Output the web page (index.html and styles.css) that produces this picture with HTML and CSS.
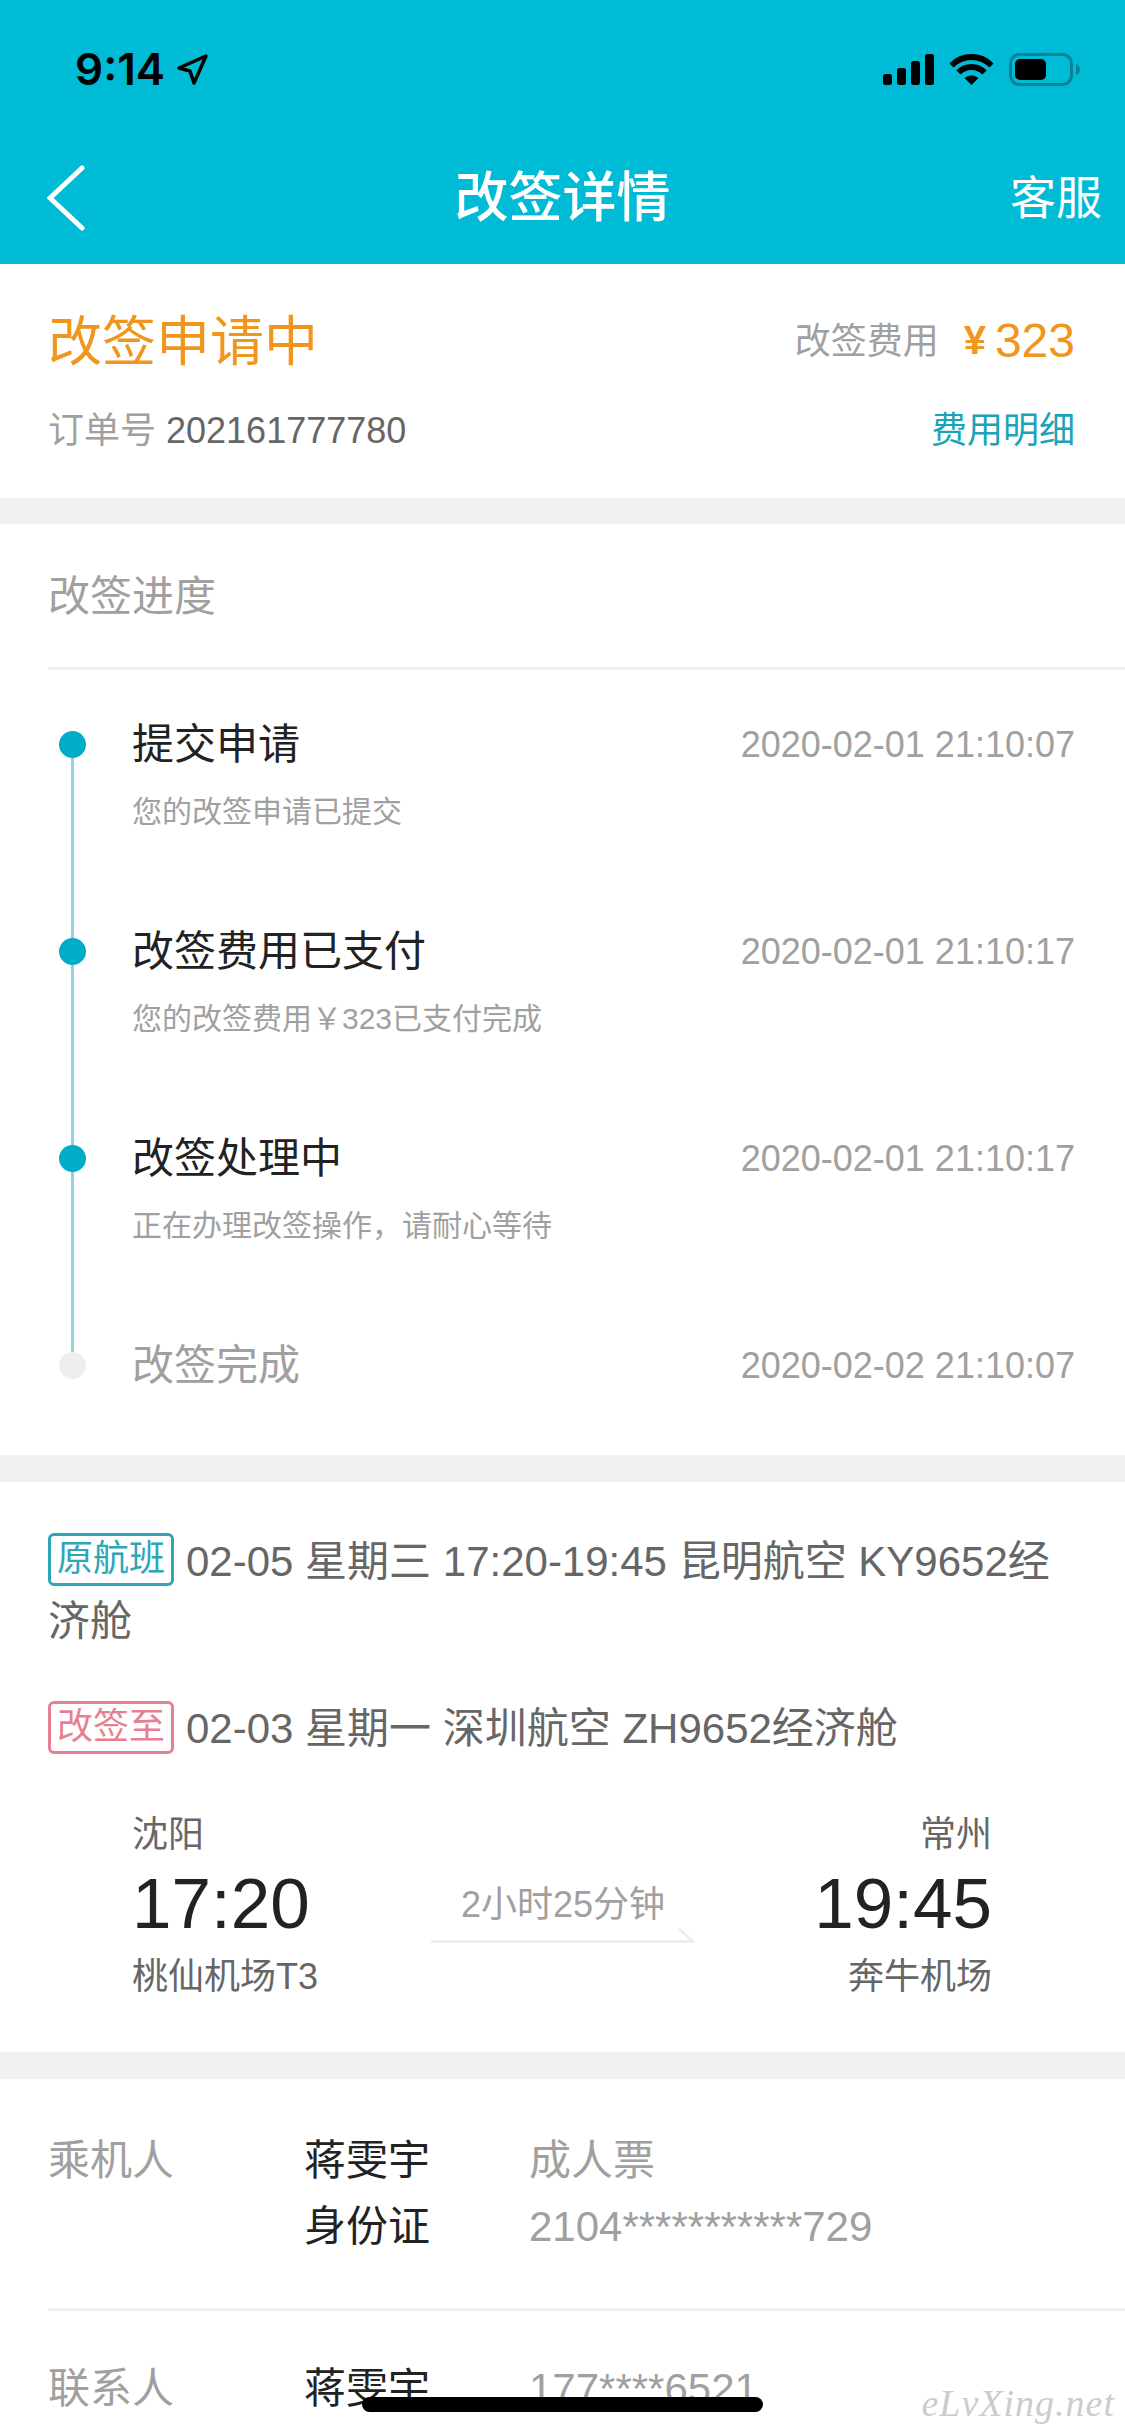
FILE: index.html
```html
<!DOCTYPE html>
<html lang="zh-CN">
<head>
	<meta charset="utf-8">
	<title>改签详情</title>
	<link rel="stylesheet" href="styles.css">
</head>
<body>
<div class="page">
	<header class="top">
		<div class="status">
			<div class="status-left">
				<span class="clock">9:14</span>
				<svg class="loc" width="33" height="33" viewBox="0 0 33 33"><path d="M30 3L3 15L14 18L18 30Z" fill="none" stroke="#000" stroke-width="3.500" stroke-linejoin="round"/></svg>
			</div>
			<div class="status-right">
				<svg width="51" height="31" viewBox="0 0 51 31"><rect x="0" y="20" width="9" height="11" rx="2.5"/><rect x="14" y="14" width="9" height="17" rx="2.5"/><rect x="28" y="7" width="9" height="24" rx="2.5"/><rect x="42" y="0" width="9" height="31" rx="2.5"/></svg>
				<svg width="45" height="31" viewBox="0 0 45 31"><path d="M2.5 11.5A28 28 0 0 1 42.5 11.5" fill="none" stroke="#000" stroke-width="6"/><path d="M9.5 18.5A18 18 0 0 1 35.5 18.5" fill="none" stroke="#000" stroke-width="6"/><path d="M15.5 24Q22.5 18.5 29.500 24L22.5 31Z"/></svg>
				<svg width="73" height="33" viewBox="0 0 73 33"><rect x="1.5" y="1.500" width="61" height="30" rx="9" fill="none" stroke="#0b8096" stroke-width="3"/><rect x="6" y="6" width="31" height="21" rx="5"/><path d="M67 11Q71 13 71 16.500Q71 20 67 22Z" fill="#0b8096"/></svg>
			</div>
		</div>
		<nav class="nav">
			<svg class="back" width="38" height="66" viewBox="0 0 38 66"><path d="M35 3L3 33L35 63" fill="none" stroke="#fff" stroke-width="5" stroke-linecap="round" stroke-linejoin="miter"/></svg>
			<h1 class="nav-title">改签详情</h1>
			<a class="nav-link">客服</a>
		</nav>
	</header>

	<section class="card summary">
		<div class="row">
			<div class="state">改签申请中</div>
			<div class="fee"><span class="fee-label">改签费用</span><span class="fee-yen">¥</span><span class="fee-num">323</span></div>
		</div>
		<div class="row row-second">
			<div class="order"><span class="muted">订单号</span> 202161777780</div>
			<a class="detail-link">费用明细</a>
		</div>
	</section>

	<section class="card progress">
		<h2 class="section-title">改签进度</h2>
		<ol class="steps">
			<li class="step">
				<div class="mark"><span class="dot"></span><span class="connector"></span></div>
				<div class="step-body">
					<div class="step-head"><span class="step-name">提交申请</span><span class="step-time">2020-02-01 21:10:07</span></div>
					<p class="step-note">您的改签申请已提交</p>
				</div>
			</li>
			<li class="step">
				<div class="mark"><span class="dot"></span><span class="connector"></span></div>
				<div class="step-body">
					<div class="step-head"><span class="step-name">改签费用已支付</span><span class="step-time">2020-02-01 21:10:17</span></div>
					<p class="step-note">您的改签费用￥323已支付完成</p>
				</div>
			</li>
			<li class="step">
				<div class="mark"><span class="dot"></span><span class="connector"></span></div>
				<div class="step-body">
					<div class="step-head"><span class="step-name">改签处理中</span><span class="step-time">2020-02-01 21:10:17</span></div>
					<p class="step-note">正在办理改签操作，请耐心等待</p>
				</div>
			</li>
			<li class="step step-last">
				<div class="mark"><span class="dot dot-off"></span></div>
				<div class="step-body">
					<div class="step-head"><span class="step-name name-off">改签完成</span><span class="step-time">2020-02-02 21:10:07</span></div>
				</div>
			</li>
		</ol>
	</section>

	<section class="card flight">
		<p class="flight-line"><span class="tag tag-old">原航班</span>02-05 星期三 17:20-19:45 昆明航空 KY9652经<br>济舱</p>
		<p class="flight-line flight-new"><span class="tag tag-new">改签至</span>02-03 星期一 深圳航空 ZH9652经济舱</p>
		<div class="route">
			<div class="end">
				<div class="city">沈阳</div>
				<div class="time">17:20</div>
				<div class="airport">桃仙机场T3</div>
			</div>
			<div class="middle">
				<div class="duration">2小时25分钟</div>
				<svg class="route-arrow" width="264" height="16" viewBox="0 0 264 16"><path d="M0 13.500H262L248 1" fill="none" stroke="#eeeeee" stroke-width="3"/></svg>
			</div>
			<div class="end end-right">
				<div class="city">常州</div>
				<div class="time">19:45</div>
				<div class="airport">奔牛机场</div>
			</div>
		</div>
	</section>

	<section class="card people">
		<div class="person person-first">
			<div class="person-label">乘机人</div>
			<div class="person-name">蒋雯宇</div>
			<div class="person-value">成人票</div>
			<div class="person-name person-col">身份证</div>
			<div class="person-value">2104***********729</div>
		</div>
		<div class="person person-second">
			<div class="person-label">联系人</div>
			<div class="person-name">蒋雯宇</div>
			<div class="person-value">177****6521</div>
		</div>
	</section>

	<div class="home-bar"></div>
	<div class="watermark">eLvXing.net</div>
</div>
</body>
</html>
```

FILE: styles.css
```css
* {
	box-sizing: border-box;
}

html, body {
	margin: 0;
	padding: 0;
}

body {
	font-family: "Liberation Sans", "Noto Sans CJK SC", sans-serif;
	color: #222;
	background: #f1f1f1;
}

p, h1, h2, ol {
	margin: 0;
	padding: 0;
	font-weight: normal;
}

.page {
	position: relative;
	width: 1125px;
	height: 2436px;
	overflow: hidden;
}

/* top bar */
.top {
	background: #00bbd5;
	height: 264px;
}

.status {
	height: 130px;
	padding: 8px 43px 0 75px;
	display: flex;
	justify-content: space-between;
	align-items: center;
}

.status-left {
	display: flex;
	align-items: center;
	gap: 11px;
}

.clock {
	font-family: Inter, "Liberation Sans", sans-serif;
	font-weight: 600;
	font-size: 44px;
	line-height: 50px;
	color: #000;
}

.status-right {
	display: flex;
	align-items: center;
	gap: 15px;
}

.nav {
	height: 134px;
	padding: 2px 23px 0 23px;
	display: grid;
	grid-template-columns: 1fr auto 1fr;
	align-items: center;
	color: #fff;
}

.back {
	display: block;
	margin-left: 24px;
}

.nav-title {
	font-size: 54px;
	font-weight: 500;
	line-height: 70px;
}

.nav-link {
	justify-self: end;
	font-size: 46px;
	line-height: 60px;
}

/* cards */
.card {
	background: #fff;
}

.summary {
	height: 234px;
	padding: 46px 50px 0 48px;
}

.row {
	display: flex;
	justify-content: space-between;
	align-items: center;
	height: 60px;
}

.row-second {
	margin-top: 27px;
}

.state {
	font-size: 54px;
	color: #f0951e;
	margin-bottom: 5px;
}

.fee {
	display: flex;
	align-items: center;
	color: #f0951e;
}

.fee-label {
	font-size: 36px;
	color: #a0a0a0;
	margin-right: 25px;
	margin-bottom: 4px;
}

.fee-yen {
	font-size: 40px;
	font-weight: bold;
	margin-right: 9px;
}

.fee-num {
	font-size: 48px;
}

.order {
	font-size: 36px;
	color: #666;
}

.muted {
	color: #a0a0a0;
}

.detail-link {
	font-size: 36px;
	color: #1ba3b8;
}

.progress {
	margin-top: 26px;
	height: 931px;
}

.section-title {
	margin-left: 48px;
	padding: 43px 0 40px;
	font-size: 42px;
	line-height: 60px;
	color: #a0a0a0;
	border-bottom: 3px solid #f0f0f0;
}

.steps {
	list-style: none;
	padding: 61px 50px 0 59px;
}

.step {
	display: flex;
	height: 207px;
}

.step-last {
	height: auto;
}

.mark {
	width: 27px;
	margin-right: 46px;
	display: flex;
	flex-direction: column;
	align-items: center;
}

.dot {
	flex: none;
	width: 27px;
	height: 27px;
	border-radius: 50%;
	background: #00acc8;
}

.dot-off {
	background: #eeeeee;
}

.connector {
	flex: 1;
	width: 3px;
	background: #8fd3dc;
}

.step-body {
	flex: 1;
}

.step-head {
	display: flex;
	justify-content: space-between;
	line-height: 27px;
}

.step-name {
	font-size: 42px;
	color: #222;
}

.name-off {
	color: #a0a0a0;
}

.step-time {
	font-size: 36px;
	color: #a0a0a0;
}

.step-note {
	margin-top: 34px;
	font-size: 30px;
	line-height: 40px;
	color: #a0a0a0;
}

.flight {
	margin-top: 27px;
	height: 570px;
	padding: 50px 50px 0 48px;
}

.flight-line {
	font-size: 42px;
	line-height: 60px;
	color: #666;
}

.flight-new {
	margin-top: 47px;
}

.tag {
	display: inline-block;
	height: 53px;
	padding: 0 6px;
	margin-right: 12px;
	border: 3px solid;
	border-radius: 6px;
	font-size: 36px;
	line-height: 46px;
	vertical-align: top;
	margin-top: 1px;
}

.tag-old {
	color: #2fa5b8;
}

.tag-new {
	color: #e67f8f;
	margin-top: 2px;
}

.route {
	margin-top: 49px;
	padding-left: 84px;
	display: grid;
	grid-template-columns: 299px 264px 297px;
}

.end-right {
	text-align: right;
}

.city {
	font-size: 36px;
	line-height: 50px;
	color: #666;
	padding-top: 2px;
	margin-bottom: -2px;
}

.time {
	font-size: 71px;
	line-height: 92px;
	color: #222;
}

.airport {
	font-size: 36px;
	line-height: 54px;
	color: #666;
}

.middle {
	padding-top: 72px;
}

.duration {
	font-size: 36px;
	line-height: 50px;
	color: #a0a0a0;
	text-align: center;
}

.route-arrow {
	display: block;
	margin-top: -2px;
}

.people {
	margin-top: 27px;
	height: 357px;
}

.person {
	margin-left: 48px;
	display: grid;
	grid-template-columns: 256px 225px 1fr;
	font-size: 42px;
	line-height: 66px;
}

.person-first {
	padding: 49px 0 48px;
	border-bottom: 3px solid #f0f0f0;
}

.person-second {
	padding-top: 45px;
}

.person-label {
	color: #a0a0a0;
}

.person-name {
	color: #222;
}

.person-col {
	grid-column: 2;
}

.person-value {
	color: #a0a0a0;
}

.home-bar {
	position: absolute;
	left: 362px;
	top: 2397px;
	width: 401px;
	height: 15px;
	border-radius: 8px;
	background: #000;
}

.watermark {
	position: absolute;
	right: 10px;
	top: 2380px;
	font-family: "Liberation Serif", serif;
	font-style: italic;
	font-size: 38px;
	line-height: 46px;
	letter-spacing: 1px;
	color: #cccccc;
}
```
